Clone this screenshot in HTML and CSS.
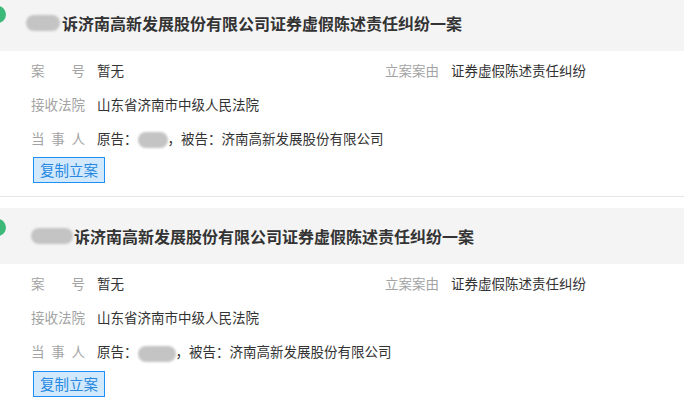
FILE: index.html
```html
<!DOCTYPE html>
<html lang="zh-CN">
<head>
    <meta charset="UTF-8">
    <meta name="viewport" content="width=device-width, initial-scale=1.0">
    <title>立案信息</title>
    <link rel="stylesheet" href="styles.css">
</head>
<body>
    <div class="case-list">
        <div class="case">
            <div class="case-head">
                <span class="dot"></span>
                <span class="blur blur-title"></span>
                <span class="case-title">诉济南高新发展股份有限公司证券虚假陈述责任纠纷一案</span>
            </div>
            <div class="case-body">
                <div class="row">
                    <span class="label">案号</span>
                    <span class="value">暂无</span>
                </div>
                <div class="row">
                    <span class="label">立案案由</span>
                    <span class="value">证券虚假陈述责任纠纷</span>
                </div>
                <div class="row wide">
                    <span class="label">接收法院</span>
                    <span class="value">山东省济南市中级人民法院</span>
                </div>
                <div class="row wide">
                    <span class="label">当事人</span>
                    <span class="value">原告：<span class="blur blur-name"></span>，被告：济南高新发展股份有限公司</span>
                </div>
            </div>
            <button class="copy-btn">复制立案</button>
        </div>

        <div class="case">
            <div class="case-head">
                <span class="dot"></span>
                <span class="blur blur-title2"></span>
                <span class="case-title">诉济南高新发展股份有限公司证券虚假陈述责任纠纷一案</span>
            </div>
            <div class="case-body">
                <div class="row">
                    <span class="label">案号</span>
                    <span class="value">暂无</span>
                </div>
                <div class="row">
                    <span class="label">立案案由</span>
                    <span class="value">证券虚假陈述责任纠纷</span>
                </div>
                <div class="row wide">
                    <span class="label">接收法院</span>
                    <span class="value">山东省济南市中级人民法院</span>
                </div>
                <div class="row wide">
                    <span class="label">当事人</span>
                    <span class="value">原告：<span class="blur blur-name2"></span>，被告：济南高新发展股份有限公司</span>
                </div>
            </div>
            <button class="copy-btn">复制立案</button>
        </div>
    </div>
</body>
</html>
```

FILE: styles.css
```css
body{
    margin: 0;
    background-color: #fff;
    font-family: "Noto Sans CJK SC", "Liberation Sans", sans-serif;
    color: #333;
    overflow: hidden;
}

.case-list{
    margin-top: -5px;
}

.case{
    border-bottom: 1px solid #e6e6e6;
    padding-bottom: 13px;
    margin-bottom: 11px;
}

.case-head{
    position: relative;
    height: 56px;
    background-color: #f4f4f4;
    display: flex;
    align-items: center;
    padding-left: 26px;
}

.dot{
    position: absolute;
    left: -11px;
    top: 11px;
    width: 17px;
    height: 17px;
    border-radius: 50%;
    background-color: #3cb878;
}

.case-title{
    font-size: 16px;
    font-weight: 600;
    color: #333;
}

.blur{
    display: inline-block;
    background-color: #c4c4c4;
    border-radius: 8px;
    filter: blur(1px);
}

.blur-title{
    width: 34px;
    height: 16px;
    margin-right: 2px;
}

.blur-title2{
    width: 42px;
    height: 16px;
    margin-left: 5px;
    margin-right: 1px;
}

.blur-name{
    width: 30px;
    height: 16px;
    vertical-align: middle;
}

.blur-name2{
    width: 38px;
    height: 16px;
    vertical-align: middle;
}

.case-body{
    display: grid;
    grid-template-columns: 354px 1fr;
    row-gap: 14px;
    padding: 9px 0 0 31px;
    font-size: 13.5px;
    line-height: 20px;
}

.row{
    display: flex;
}

.row.wide{
    grid-column: 1 / 3;
}

.label{
    width: 54px;
    margin-right: 12px;
    color: #a3a3a3;
    text-align: justify;
    text-align-last: justify;
}

.value{
    color: #333;
}

.copy-btn{
    display: block;
    margin: 9px 0 0 33px;
    width: 72px;
    height: 26px;
    padding: 0;
    border: 1px solid #1e90f5;
    background-color: #d2e9fd;
    color: #2688e0;
    font-family: "Noto Sans CJK SC", "Liberation Sans", sans-serif;
    font-size: 14.5px;
    line-height: 24px;
    cursor: pointer;
}
```
